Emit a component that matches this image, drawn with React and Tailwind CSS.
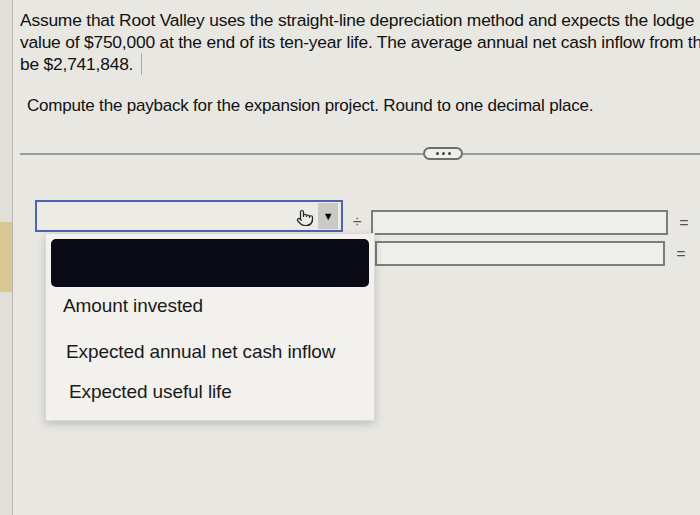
import React from "react";
import { Pointer } from "lucide-react";

export default function App() {
  const font = { fontFamily: '"Liberation Sans", Arial, sans-serif' };
  return (
    <div
      className="w-[700px] h-[515px] overflow-hidden bg-[#e8e7e2] flex text-[#111]"
      style={font}
    >
      {/* left strip */}
      <div className="w-[13px] shrink-0 border-r border-[#b9b7b0] bg-[#e1dfd8] flex flex-col">
        <div className="h-[222px]" />
        <div className="h-[70px] bg-[#d8c994]" />
      </div>

      {/* main */}
      <div className="flex-1 min-w-0 flex flex-col pl-[7px] pt-[9px]">
        <div className="text-[17.4px] leading-[22px] tracking-[-0.2px]">
          <div className="whitespace-nowrap">
            Assume that Root Valley uses the straight-line depreciation method and expects the lodge
          </div>
          <div className="whitespace-nowrap">
            value of $750,000 at the end of its ten-year life. The average annual net cash inflow from the
          </div>
          <div className="whitespace-nowrap flex items-center">
            be $2,741,848.
            <span className="ml-[8px] inline-block w-px h-[22px] bg-[#a8a8a8]" />
          </div>
        </div>

        <div className="mt-[20px] pl-[7px] text-[17px] leading-[22px] tracking-[-0.2px] whitespace-nowrap">
          Compute the payback for the expansion project. Round to one decimal place.
        </div>

        {/* divider */}
        <div className="mt-[30px] flex items-center">
          <div className="w-[403px] h-[2px] bg-[#9a9a98]" />
          <div className="w-[40px] h-[13px] rounded-full border-2 border-[#6e6e6c] bg-[#eeeeea] flex items-center justify-center gap-[3px]">
            <span className="w-[3px] h-[3px] rounded-full bg-[#444]" />
            <span className="w-[3px] h-[3px] rounded-full bg-[#444]" />
            <span className="w-[3px] h-[3px] rounded-full bg-[#444]" />
          </div>
          <div className="flex-1 h-[2px] bg-[#9a9a98]" />
        </div>

        {/* formula */}
        <div className="relative mt-[40px] pl-[15px]">
          <div className="flex items-start">
            <div className="w-[310px] h-[32px] border-2 border-[#4e62ad] bg-[#ecebe6] flex items-center justify-end pr-[3px]">
              <Pointer size={18} strokeWidth={1.6} className="text-[#222] mr-[4px] mt-[4px]" />
              <div className="w-[20px] h-[26px] bg-[#c9c9c6] flex items-center justify-center text-[11px] text-black">
                ▼
              </div>
            </div>
            <div className="w-[28px] pt-[10px] text-center text-[16px] text-[#555]">÷</div>
            <div className="flex flex-col gap-[6px] pt-[10px]">
              <div className="flex items-center">
                <div className="w-[297px] h-[25px] border-2 border-[#7c7c7a] bg-[#efeeea]" />
                <div className="w-[32px] text-center text-[16px] text-[#555]">=</div>
              </div>
              <div className="flex items-center pl-[4px]">
                <div className="w-[290px] h-[25px] border-2 border-[#7c7c7a] bg-[#efeeea]" />
                <div className="w-[32px] text-center text-[16px] text-[#555]">=</div>
              </div>
            </div>
          </div>

          {/* dropdown menu */}
          <div className="absolute left-[25px] top-[33px] w-[330px] bg-[#f2f1ed] shadow-[0_3px_8px_rgba(0,0,0,0.18)] border border-[#dcdbd6] px-[5px] pt-[5px] pb-[16px]">
            <div className="h-[48px] rounded-[5px] bg-[#090a14]" />
            <div className="pl-[12px] pt-[7px] text-[19px] leading-[24px] tracking-[-0.1px] text-[#1a1a1a]">
              <div className="h-[24px]">Amount invested</div>
              <div className="h-[24px] mt-[22px] pl-[3px]">Expected annual net cash inflow</div>
              <div className="h-[24px] mt-[16px] pl-[6px]">Expected useful life</div>
            </div>
          </div>
        </div>
      </div>
    </div>
  );
}
